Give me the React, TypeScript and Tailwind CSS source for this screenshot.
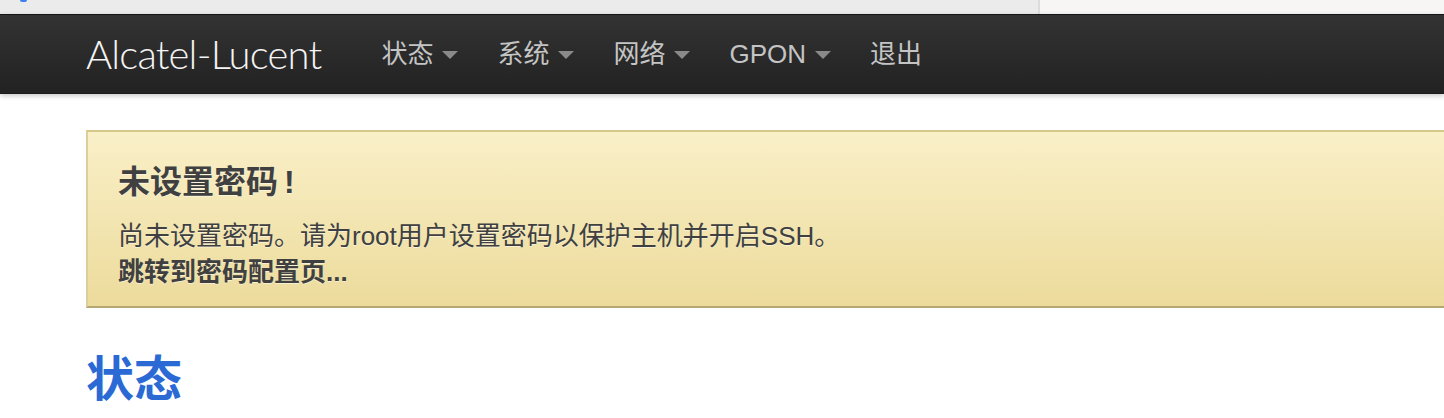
import React from "react";

const navItems = [
  { label: "状态", caret: true },
  { label: "系统", caret: true },
  { label: "网络", caret: true },
  { label: "GPON", caret: true },
  { label: "退出", caret: false },
];

export default function App() {
  return (
    <div className="w-[1444px] h-[418px] overflow-hidden bg-white font-['Liberation_Sans','Noto_Sans_CJK_SC',sans-serif]">
      {/* top browser strip */}
      <div className="h-[14px] flex">
        <div className="w-[1038px] bg-[#ebebeb] relative">
          <div className="absolute left-[20px] top-0 w-[7px] h-[2px] rounded-b-full bg-[#3b7ff0]" />
        </div>
        <div className="w-[2px] bg-[#dcdcdc]" />
        <div className="flex-1 bg-[#f7f6f4]" />
      </div>

      {/* navbar */}
      <nav className="relative z-10 h-[80px] border-t border-[#151515] border-b border-b-[#1b1b1b] bg-linear-to-b from-[#333333] to-[#222222] shadow-[0_2px_5px_rgba(0,0,0,0.22)] flex items-center pl-[86px]">
        <span className="font-['Lato',sans-serif] font-light text-[40px] leading-none tracking-[-0.8px] text-[#f4f4f4]">
          Alcatel-Lucent
        </span>
        <ul className="flex items-center gap-[39px] ml-[60px]">
          {navItems.map((item) => (
            <li key={item.label} className="flex items-center text-[26px] leading-none text-[#c4c4c4]">
              <span>{item.label}</span>
              {item.caret && (
                <span className="ml-[9px] mt-[2px] w-0 h-0 border-l-[8px] border-r-[8px] border-t-[8px] border-l-transparent border-r-transparent border-t-[#8a8a8a]" />
              )}
            </li>
          ))}
        </ul>
      </nav>

      {/* alert */}
      <div className="mt-[36px] ml-[86px] w-[1420px] border-t-2 border-l-2 border-b-2 border-t-[#d6c88b] border-l-[#dccf9b] border-b-[#b5a673] bg-linear-to-b from-[#faf0c8] to-[#ecdb9b] pl-[30px] pt-[30px] pb-[16px] text-[#404040] [text-shadow:0_1px_0_rgba(255,255,255,0.5)]">
        <h4 className="text-[32px] leading-[40px] font-bold mb-[16px]">
          未设置密码<span className="ml-[6px]">!</span>
        </h4>
        <p className="text-[26px] leading-[36px]">尚未设置密码。请为root用户设置密码以保护主机并开启SSH。</p>
        <p className="text-[26px] leading-[36px] font-bold">跳转到密码配置页...</p>
      </div>

      {/* heading */}
      <h2 className="mt-[48px] ml-[86px] text-[48px] leading-[48px] font-bold text-[#2b6ad4]">状态</h2>
    </div>
  );
}
